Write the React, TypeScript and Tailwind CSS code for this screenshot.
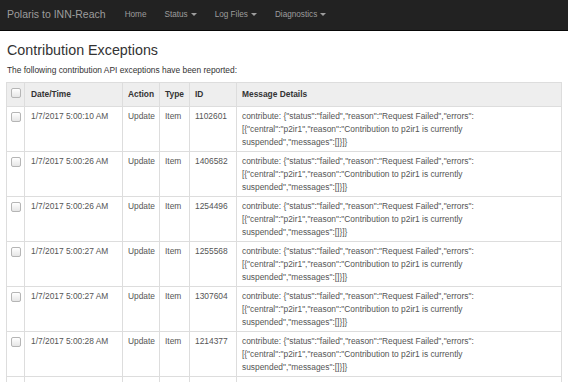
import { useState } from 'react'

const rows = [
  { time: '1/7/2017 5:00:10 AM', id: '1102601' },
  { time: '1/7/2017 5:00:26 AM', id: '1406582' },
  { time: '1/7/2017 5:00:26 AM', id: '1254496' },
  { time: '1/7/2017 5:00:27 AM', id: '1255568' },
  { time: '1/7/2017 5:00:27 AM', id: '1307604' },
  { time: '1/7/2017 5:00:28 AM', id: '1214377' },
  { time: '1/7/2017 5:00:28 AM', id: '1190542' },
]

function Caret() {
  return <span className="ml-[3px] inline-block h-0 w-0 border-x-[3px] border-t-[3px] border-x-transparent border-t-current align-middle" />
}

function Box() {
  return <span className="inline-block h-[10px] w-[10px] rounded-[2px] border border-[#b5b5b5] bg-gradient-to-b from-white to-[#e6e6e6]" />
}

export default function App() {
  const [nav] = useState(['Home', 'Status', 'Log Files', 'Diagnostics'])

  return (
    <div className="h-[382px] overflow-hidden bg-white font-['Liberation_Sans',Arial,sans-serif] text-[#333]">
      <nav className="flex h-[31px] items-center bg-[#222] border-b border-[#080808]">
        <span className="pl-[7px] pr-[10px] text-[10.5px] text-[#9d9d9d]">Polaris to INN-Reach</span>
        {nav.map((n, i) => (
          <span key={n} className="px-[9px] text-[8.2px] text-[#9d9d9d]">
            {n}
            {i > 0 && <Caret />}
          </span>
        ))}
      </nav>

      <div className="px-[6px]">
        <h1 className="mt-[9px] pl-[1px] text-[14.3px] leading-[20px] text-[#333]">Contribution Exceptions</h1>
        <p className="mt-[5px] pl-[1px] text-[8.4px] leading-[11px] text-[#333]">
          The following contribution API exceptions have been reported:
        </p>

        <table className="mt-[6px] w-[556px] table-fixed border-collapse text-[8.4px] leading-[13px]">
          <colgroup>
            <col className="w-[18px]" />
            <col className="w-[98px]" />
            <col className="w-[37px]" />
            <col className="w-[30px]" />
            <col className="w-[47px]" />
            <col />
          </colgroup>
          <thead>
            <tr className="h-[24px] bg-[#eeeeee] text-left font-bold text-[#333]">
              <th className="border border-[#ddd] pl-[4px] align-middle"><Box /></th>
              <th className="border border-[#ddd] pl-[6px]">Date/Time</th>
              <th className="border border-[#ddd] pl-[5px]">Action</th>
              <th className="border border-[#ddd] pl-[5px]">Type</th>
              <th className="border border-[#ddd] pl-[5px]">ID</th>
              <th className="border border-[#ddd] pl-[5px]">Message Details</th>
            </tr>
          </thead>
          <tbody className="text-[#555]">
            {rows.map((r, i) => (
              <tr key={i} className="h-[45px] align-top">
                <td className="border border-[#ddd] pl-[4px] pt-[5px]"><Box /></td>
                <td className="border border-[#ddd] pl-[6px] pt-[3px]">{r.time}</td>
                <td className="border border-[#ddd] pl-[5px] pt-[3px]">Update</td>
                <td className="border border-[#ddd] pl-[5px] pt-[3px]">Item</td>
                <td className="border border-[#ddd] pl-[5px] pt-[3px]">{r.id}</td>
                <td className="border border-[#ddd] pl-[5px] pt-[3px] pb-[2px]">
                  contribute: {'{"status":"failed","reason":"Request Failed","errors":'}
                  <br />
                  {'[{"central":"p2ir1","reason":"Contribution to p2ir1 is currently'}
                  <br />
                  {'suspended","messages":[]}]}'}
                </td>
              </tr>
            ))}
          </tbody>
        </table>
      </div>
    </div>
  )
}
